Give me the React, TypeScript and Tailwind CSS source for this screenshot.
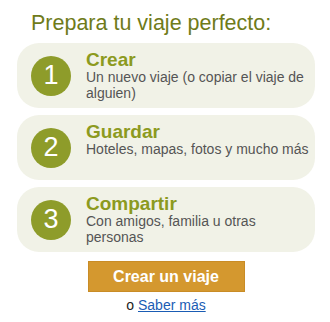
import React from "react";

const steps = [
  { n: "1", title: "Crear", desc: "Un nuevo viaje (o copiar el viaje de alguien)" },
  { n: "2", title: "Guardar", desc: "Hoteles, mapas, fotos y mucho más" },
  { n: "3", title: "Compartir", desc: "Con amigos, familia u otras personas" },
];

export default function App() {
  return (
    <div
      className="w-[330px] h-[322px] bg-white pl-[17px] pr-[15px] pt-[11px]"
      style={{ fontFamily: '"Liberation Sans", Arial, sans-serif' }}
    >
      <h1 className="pl-[14px] text-[21.5px] leading-[24px] text-[#6f7b1a] font-normal">
        Prepara tu viaje perfecto:
      </h1>
      <div className="mt-[8px] flex flex-col gap-[7px]">
        {steps.map((s) => (
          <div
            key={s.n}
            className="h-[65px] rounded-[22px] bg-[#f1f2e7] flex items-center pl-[14px] pr-[2px]"
          >
            <div className="w-[40px] h-[40px] shrink-0 rounded-full bg-[#8e9c2a] flex items-center justify-center text-white text-[27px] leading-none">
              {s.n}
            </div>
            <div className="self-stretch pt-[7px] pl-[15px] min-w-0">
              <div className="text-[19px] leading-[20px] font-bold text-[#8c9a20]">{s.title}</div>
              <div className="text-[14px] leading-[15.5px] text-[#555555]">{s.desc}</div>
            </div>
          </div>
        ))}
      </div>
      <div className="mt-[9px] flex justify-center">
        <button className="w-[157px] h-[31px] bg-[#d4982f] border border-[#c98c26] text-white font-bold text-[16px] leading-none">
          Crear un viaje
        </button>
      </div>
      <div className="mt-[5px] text-center text-[14px] leading-[16px] text-[#222222]">
        o{" "}
        <a href="#" className="text-[#1a5cb4] underline">
          Saber más
        </a>
      </div>
    </div>
  );
}
